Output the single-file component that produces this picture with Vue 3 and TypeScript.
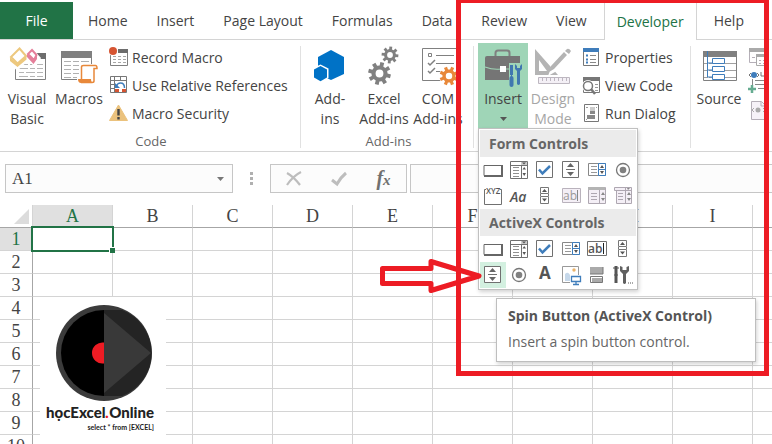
<script setup lang="ts">
import { ref } from 'vue'

interface Command {
  label: string
  icon: string
  disabled?: boolean
  menu?: boolean
}

interface MenuItem {
  label: string
  icon: string
}

const tabs = ['Home', 'Insert', 'Page Layout', 'Formulas', 'Data', 'Review', 'View', 'Developer', 'Help']
const activeTab = ref('Developer')

// The last column only closes the grid at the right edge and has no heading.
const columns = ['A', 'B', 'C', 'D', 'E', 'F', 'G', 'H', 'I', '']
const rows = Array.from({ length: 10 }, (_, i) => i + 1)
const cellName = ref('A1')
const formula = ref('')

/** Outline of a cog wheel with square teeth and a round hole. */
function gear(cx: number, cy: number, outer: number, teeth: number, fill: string, turn = 0): string {
  const inner = outer * 0.7
  const step = (Math.PI * 2) / teeth
  const points: string[] = []
  for (let i = 0; i < teeth; i++) {
    const a = i * step + turn
    const corners: [number, number][] = [[-0.3, inner], [-0.22, outer], [0.22, outer], [0.3, inner]]
    for (const [offset, r] of corners) {
      const t = a + offset * step
      points.push(`${(cx + r * Math.cos(t)).toFixed(2)} ${(cy + r * Math.sin(t)).toFixed(2)}`)
    }
  }
  const h = outer * 0.34
  return `<path fill="${fill}" fill-rule="evenodd" d="M${points.join('L')}Z M${cx - h} ${cy}a${h} ${h} 0 1 0 ${h * 2} 0a${h} ${h} 0 1 0 ${-h * 2} 0Z"/>`
}

const art: Record<string, string> = {
  visualBasic: `<path d="M8.500 5.500h30v26h-30z" fill="#fff" stroke="#808080"/><path d="M31 5h8v6h-8z" fill="#6d6d6d"/>
    <path d="M12 16.500h9m2 0h5m2 0h6M12 20.500h9m2 0h5m2 0h6M12 24.500h5m2 0h9m2 0h6M12 28.500h9m2 0h5m2 0h6" stroke="#b5b5b5"/>
    <path d="M11-2 0 11l10 12L22 12zM24-1l-7 7 11 14 6-10z" fill="#fff"/>
    <path d="M12.500.500 19 8 10.500 15.500 4 9z" fill="#fff" stroke="#edc87e" stroke-width="2"/><path d="M3 9.500l7.500 6L19.500 8v3.500l-9 7.500L3 13z" fill="#edc87e"/>
    <path d="M25 2l4.500 5-2.500 5L21 6z" fill="#fff" stroke="#e57f9a" stroke-width="2"/><path d="M20 6l7 6 3-5v4l-3.500 5L20 9z" fill="#e57f9a"/>`,
  macros: `<path d="M2.500 3.500h30v28h-30z" fill="#fff" stroke="#808080"/><path d="M2 3h31v7H2z" fill="#808080"/>
    <path d="M5 13.500h7m2 0h6m2 0h8M5 17.500h7m2 0h6m2 0h8M5 21.500h7m2 0h6M5 25.500h7m2 0h6M5 29.500h7m2 0h4" stroke="#b0b0b0"/>
    <path d="M22 16h15v6h-2v15H18v-9h4z" fill="#fff"/><path d="M22.500 31V19q0-1.500 2-1.500h12q1.500 0 1.500 3h-3V33q0 1.500-2 1.500H22" fill="#fff" stroke="#e8883a" stroke-width="1.500"/>
    <path d="M19 31h13q0 4 3 4H22q-3 0-3-4z" fill="#e8883a"/>`,
  addins: `<path d="M21 2l13 7v17l-13 6-13-6V9z" fill="#0072c6"/><path d="M10.500 16.500l8 4v9.500l-8 4.500-8-4.500v-9.500z" fill="#fff"/><path d="M10.500 18l6.500 3.500v8l-6.500 3.700L4 29.500v-8z" fill="#0072c6"/>`,
  excelAddins: gear(26, 7, 8.500, 8, '#808080', 0.1) + gear(15.500, 25.500, 11.500, 8, '#808080', 0.25),
  comAddins: `<path d="M4.500.500h36v32h-36z" fill="#fff" stroke="#808080"/><path d="M10.500 5.500h3v3h-3z" fill="none" stroke="#808080"/><path d="M18 7.500h18M18 15.500h18M18 23.500h8" stroke="#808080"/>
    <path d="M10 15l2 2 5-5M10 23l2 2 5-5" fill="none" stroke="#808080" stroke-width="1.500"/><circle cx="31" cy="28" r="10" fill="#fff"/>` + gear(31, 28, 9.500, 8, '#e8883a', 0.4),
  insert: `<path d="M12.500 9V5q0-2.500 2.500-2.500h9q2.500 0 2.500 2.500v4" fill="none" stroke="#808080" stroke-width="2"/><path d="M4 8h31q2 0 2 2v22H2V10q0-2 2-2z" fill="#757575"/>
    <path d="M2 19q8 3 16 2h5q8 0 14-2" fill="none" stroke="#9fd5b7" stroke-width="1.200"/><path d="M17 18h6v6h-6z" fill="#fff"/>
    <path d="M26 15h14v23H26z" fill="#9fd5b7"/><path d="M26 8h11v7H26z" fill="#757575"/>
    <path d="M28.500 17v10" stroke="#4077b0" stroke-width="3"/><path d="M28.500 27v3" stroke="#4077b0"/><path d="M28.500 30v7" stroke="#4077b0" stroke-width="4" stroke-linecap="round"/>
    <path d="M32 16v5l2 2v13q1.500 2 3 0V23l2-2v-5l-2 2v2h-3v-2z" fill="#4077b0"/>`,
  design: `<path fill-rule="evenodd" d="M2 1v26h23zM6 12l8 11H6z" fill="#b4b4b4"/><path d="M33 3 18 20l-3 8 7-4L38 6z" fill="#fff"/><path d="M31 4l3 3L21 21l-5 3 2-6zM32 3l2-2q2-1 4 2l-2 3z" fill="#b4b4b4"/>
    <path d="M5.500 29.500h31v6h-31z" fill="#f4f0f6" stroke="#bdb7c0"/><path d="M9.500 30v3m4-3v3m4-3v3m4-3v3m4-3v3m4-3v3m4-3v3" stroke="#bdb7c0"/>`,
  source: `<path d="M4.500 4.500h33v28h-33z" fill="#fff" stroke="#808080"/><path d="M4 3h34v6H4z" fill="#808080"/><path d="M10 15.500h27M10 22.500h27M10 29.500h27M5 15.500h4M5 22.500h4M5 29.500h4" stroke="#a0a0a0"/>
    <path d="M8.500 3v26h5M8.500 15h5M8.500 22h5" fill="none" stroke="#3f7dbb"/><path d="M13.500 10.500h12v5h-12zM13.500 18.500h12v5h-12zM13.500 26.500h12v5h-12z" fill="#fff" stroke="#3f7dbb"/>`,
  record: `<path d="M1.500 3.500h17v15h-17z" fill="#fff" stroke="#808080"/><path d="M9 2h10v4H9z" fill="#6d6d6d"/><path d="M4 9.500h3m2 0h3m2 0h3M4 12.500h3m2 0h3m2 0h3M4 15.500h3m2 0h3m2 0h3" stroke="#a6a6a6"/><circle cx="4" cy="4" r="5" fill="#fff"/><circle cx="4" cy="4" r="4" fill="#d65532"/>`,
  relative: `<path d="M1.500 1.500h16v16h-16zM1 5.500h17M5.500 1v17M11.500 1v5M1 9.500h5M1 13.500h5" fill="#fff" stroke="#777"/><path d="M6 6h11v11H6z" fill="#fff"/><path d="M15.500 13q0-5-4-5-3 0-4 3" fill="none" stroke="#3f7dbb" stroke-width="1.500"/><path d="M6 8v5h5z" fill="#3f7dbb"/><path d="M6 14h4v3H6zM13 14h4v3h-4z" fill="#d65532"/>`,
  security: `<path d="M9.500 2 18.500 17.500H.500z" fill="#ebc27d" stroke="#ebc27d" stroke-linejoin="round"/><path d="M9.500 6v6.500M9.500 14v2.500" stroke="#444" stroke-width="2.400"/>`,
  properties: `<path d="M1.500 1.500h15v17h-15z" fill="#fff" stroke="#777"/><path d="M1 1h16v4H1z" fill="#3f7dbb"/><path d="M4 8.500h2M4 12.500h2M4 15.500h2" stroke="#3f7dbb" stroke-width="2"/><path d="M8 8.500h6M8 12.500h6M8 15.500h6" stroke="#888"/>`,
  viewCode: `<path d="M1.500 2.500h16v15h-16z" fill="#fff" stroke="#777"/><path d="M1 2h17v4H1z" fill="#777"/><path d="M13 9.500h3M13 12.500h3M13 15.500h3" stroke="#999"/><circle cx="6" cy="11" r="6" fill="#fff"/><circle cx="6" cy="11" r="4.500" fill="#fff" stroke="#777" stroke-width="1.500"/><path d="M9 14l4 5" stroke="#777" stroke-width="2.500"/>`,
  runDialog: `<path d="M2.500 1.500h14v17h-14z" fill="#fff" stroke="#777"/><path d="M8 8h5v3H8zM5 12h8v4H5z" fill="#888"/><path d="M8 4h5v4H8z" fill="#ccc"/><path d="M4 4.500h2M14 4.500h1M4 16.500h1" stroke="#999"/>`,
  mapProps: `<path d="M.500 1.500h18v14H.500z" fill="#fff" stroke="#b5afb8"/><path d="M0 1h19v4H0z" fill="#aaa"/><path d="M7.500 8.500h12v10h-12z" fill="#fff" stroke="#aaa"/><path d="M7 7h12v3H7z" fill="#aaa"/><path d="M3 10.500h3M10 13.500h2m2 0h3M10 16.500h2m2 0h3" stroke="#b5afb8"/>`,
  expansion: `<circle cx="5" cy="0" r="3" fill="#3f7dbb"/><path d="M0 0l2-2M0 0l2 2M10 0 8-2m2 2L8 2M12-3v4h3" stroke="#777" fill="none"/><path d="M3.500 4v6M6 5.500h13M6 9.500h13M9 13.500h10" stroke="#888"/><path d="M3 10v8M-1 14h8" stroke="#66ac91" stroke-width="2.500"/>`,
  refresh: `<path d="M2.500-1.500h10l4 4v14h-14z" fill="#f6f2f8" stroke="#b5afb8"/><path d="M12-1v4h5" fill="none" stroke="#b5afb8"/><circle cx="9" cy="7" r="2.500" fill="#aaa"/><path d="M5 5 3 7l2 2M14 5l2 2-2 2" fill="none" stroke="#aaa"/>`,
}

const listLines = `<path d="M4 7.500h6M4 10.500h6M4 13.500h6M4 16.500h6" stroke="#909090"/>`
const glyphs: Record<string, string> = {
  button: `<path d="M1 5.500h18v10H1z" fill="#fff" stroke="#666"/><path d="M19 5v11H1" fill="none" stroke="#666" stroke-width="2"/>`,
  combo: `<path d="M1.500 1.500h17v17h-17zM2 5.500h16M12.500 5v13" fill="#fff" stroke="#707070"/>${listLines}<path d="M12 2h6v3h-6z" fill="#ccc"/><path d="M13 2.500h4l-2 2zM13.500 9.500h3.500L15.200 7zM13.500 13h3.500l-1.800 3z" fill="#555"/>`,
  check: `<path d="M1.500 1.500h16v16h-16z" fill="#fff" stroke="#707070"/><path d="M4 9.500l3.500 4L15 6" fill="none" stroke="#3f7dbb" stroke-width="2.500"/>`,
  spin: `<path d="M1.500 1.500h16v16h-16zM5 9.500h9" fill="#fff" stroke="#707070"/><path d="M9.500 3 13 7H6zM9.500 16 13 12H6z" fill="#666"/>`,
  listBox: `<path d="M1.500 3.500h17v12h-17z" fill="#fff" stroke="#888"/><path d="M4 6.500h6M4 9.500h6M4 12.500h6" stroke="#999"/><path d="M11.500 3.500h7v12h-7zM12 9.500h6" fill="#fff" stroke="#3f7dbb"/><path d="M13 8h4l-2-3zM13 11h4l-2 3z" fill="#555"/>`,
  option: `<circle cx="10" cy="10" r="6.500" fill="#fff" stroke="#777" stroke-width="1.300"/><circle cx="10" cy="10" r="3.300" fill="#808080"/>`,
  group: `<path d="M3 3.500H1.500v15h17v-15H17" fill="none" stroke="#707070"/><text x="3" y="8" class="tiny">XYZ</text>`,
  label: `<text x="1" y="16" class="italic">Aa</text>`,
  scroll: `<path d="M5.500 1.500h8v6h-8zM5.500 10.500h8v7h-8zM5.500 8v2M13.500 8v2" fill="#fff" stroke="#777"/><path d="M7 6h5L9.500 3zM7 12.500h5l-2.500 3z" fill="#555"/>`,
  textOff: `<path d="M1.500 2.500h18v14h-18z" fill="#f4eff6" stroke="#b9b2bc"/><text x="2" y="14" class="ab off">ab</text><path d="M16.500 4v11" stroke="#888"/>`,
  listOff: `<path d="M1.500 1.500h17v16h-17z" fill="#f4eff6" stroke="#aea7b1"/><path d="M1 1h17v3H1z" fill="#b4b4b4"/><path d="M4 7.500h6M4 10.500h6M4 13.500h6M12.500 4v13" stroke="#aea7b1"/><path d="M14 9h4l-2-3zM14 12h4l-2 3z" fill="#888"/>`,
  comboOff: `<path d="M1.500 1.500h17v3h-17zM3.500 4.500h15v13h-15z" fill="#f4eff6" stroke="#aea7b1"/><path d="M5 7.500h5M5 10.500h5M5 13.500h5M12.500 2v15" stroke="#aea7b1"/><path d="M14 2h3l-2 2zM14 9h4l-2-3zM14 12h4l-2 3z" fill="#888"/>`,
  text: `<path d="M.500 2.500h19v14h-19z" fill="#fff" stroke="#707070"/><text x="1" y="14" class="ab">ab</text><path d="M16.500 4v11" stroke="#222"/>`,
  letter: `<text x="4" y="14" class="big">A</text>`,
  image: `<path d="M1.500 1.500h16v16h-16z" fill="#fff" stroke="#999"/><path d="M4 16V9q3-3 5 1l2 6z" fill="#c6d8ea"/><circle cx="13" cy="5" r="1.700" fill="#ebb36a"/><path d="M9 10h11v9H9z" fill="#fff"/><path d="M10.500 11.500h9v5h-9zM15 17v2M12 19.500h6" fill="#fff" stroke="#3f7dbb" stroke-width="1.300"/>`,
  toggle: `<path d="M3 2h13v7H3z" fill="#aaa"/><path d="M3.500 11.500h12v6h-12z" fill="#fff" stroke="#777"/><path d="M5 13h10v4H5z" fill="#aaa"/><path d="M16 2v7H3" stroke="#777" fill="none"/>`,
  more: `<path d="M3 1v9M3 10v8" stroke="#555" stroke-width="3"/><path d="M0 3h6M1 10h4" stroke="#555"/><path d="M7 1v5l3 3v9q1.500 2 3 0V9l3-3V1l-2.500 1v3h-4V2z" fill="#606060"/><path d="M15 18h1m1 0h1m1 0h1" stroke="#555"/>`,
}

const codeLarge: Command[] = [
  { label: 'Visual Basic', icon: 'visualBasic' },
  { label: 'Macros', icon: 'macros' },
]
const codeSmall: Command[] = [
  { label: 'Record Macro', icon: 'record' },
  { label: 'Use Relative References', icon: 'relative' },
  { label: 'Macro Security', icon: 'security' },
]
const addins: Command[] = [
  { label: 'Add-\nins', icon: 'addins' },
  { label: 'Excel\nAdd-ins', icon: 'excelAddins' },
  { label: 'COM\nAdd-ins', icon: 'comAddins' },
]
const controlsLarge: Command[] = [
  { label: 'Insert', icon: 'insert', menu: true },
  { label: 'Design Mode', icon: 'design', disabled: true },
]
const controlsSmall: Command[] = [
  { label: 'Properties', icon: 'properties' },
  { label: 'View Code', icon: 'viewCode' },
  { label: 'Run Dialog', icon: 'runDialog' },
]
const xmlSmall: Command[] = [
  { label: 'Map Properties', icon: 'mapProps' },
  { label: 'Expansion Packs', icon: 'expansion' },
  { label: 'Refresh Data', icon: 'refresh' },
]

const menus: { title: string; items: MenuItem[] }[] = [
  {
    title: 'Form Controls',
    items: [
      { label: 'Button', icon: 'button' },
      { label: 'Combo Box', icon: 'combo' },
      { label: 'Check Box', icon: 'check' },
      { label: 'Spin Button', icon: 'spin' },
      { label: 'List Box', icon: 'listBox' },
      { label: 'Option Button', icon: 'option' },
      { label: 'Group Box', icon: 'group' },
      { label: 'Label', icon: 'label' },
      { label: 'Scroll Bar', icon: 'scroll' },
      { label: 'Text Field', icon: 'textOff' },
      { label: 'Combo List', icon: 'listOff' },
      { label: 'Combo Drop-Down', icon: 'comboOff' },
    ],
  },
  {
    title: 'ActiveX Controls',
    items: [
      { label: 'Command Button', icon: 'button' },
      { label: 'Combo Box', icon: 'combo' },
      { label: 'Check Box', icon: 'check' },
      { label: 'List Box', icon: 'listBox' },
      { label: 'Text Box', icon: 'text' },
      { label: 'Scroll Bar', icon: 'scroll' },
      { label: 'Spin Button', icon: 'spin' },
      { label: 'Option Button', icon: 'option' },
      { label: 'Label', icon: 'letter' },
      { label: 'Image', icon: 'image' },
      { label: 'Toggle Button', icon: 'toggle' },
      { label: 'More Controls', icon: 'more' },
    ],
  },
]
const isHovered = (title: string, item: MenuItem) => title === 'ActiveX Controls' && item.label === 'Spin Button'
</script>

<template>
  <div class="window">
    <nav class="tabs">
      <button class="file" type="button">File</button>
      <button
        v-for="tab in tabs"
        :key="tab"
        type="button"
        class="tab"
        :class="{ active: tab === activeTab }"
        @click="activeTab = tab"
      >{{ tab }}</button>
    </nav>

    <div class="ribbon">
      <section class="group">
        <div class="group-body">
          <button v-for="c in codeLarge" :key="c.label" type="button" class="large">
            <svg class="icon-large" viewBox="0 0 40 36" v-html="art[c.icon]" />
            <span>{{ c.label }}</span>
          </button>
          <div class="list">
            <button v-for="c in codeSmall" :key="c.label" type="button" class="small">
              <svg class="icon-small" viewBox="0 0 20 20" v-html="art[c.icon]" />{{ c.label }}
            </button>
          </div>
        </div>
        <div class="group-label">Code</div>
      </section>

      <section class="group addins">
        <div class="group-body">
          <button v-for="c in addins" :key="c.label" type="button" class="large">
            <svg class="icon-large" viewBox="0 0 40 36" v-html="art[c.icon]" />
            <span>{{ c.label }}</span>
          </button>
        </div>
        <div class="group-label">Add-ins</div>
      </section>

      <section class="group controls">
        <div class="group-body">
          <button
            v-for="c in controlsLarge"
            :key="c.label"
            type="button"
            class="large"
            :class="{ pressed: c.menu }"
            :disabled="c.disabled"
          >
            <svg class="icon-large" viewBox="0 0 40 36" v-html="art[c.icon]" />
            <span>{{ c.label }}</span>
            <svg v-if="c.menu" class="caret" viewBox="0 0 7 4"><path d="M0 0h7L3.500 4z" /></svg>
          </button>
          <div class="list">
            <button v-for="c in controlsSmall" :key="c.label" type="button" class="small">
              <svg class="icon-small" viewBox="0 0 20 20" v-html="art[c.icon]" />{{ c.label }}
            </button>
          </div>
        </div>

        <div class="gallery" role="menu">
          <template v-for="m in menus" :key="m.title">
            <h2>{{ m.title }}</h2>
            <div class="gallery-grid">
              <button
                v-for="item in m.items"
                :key="item.label"
                type="button"
                role="menuitem"
                :aria-label="item.label"
                :class="{ hovered: isHovered(m.title, item) }"
              >
                <svg class="icon-small" viewBox="0 0 20 20" v-html="glyphs[item.icon]" />
              </button>
            </div>
          </template>
        </div>
      </section>

      <section class="group xml">
        <div class="group-body">
          <button type="button" class="large">
            <svg class="icon-large" viewBox="0 0 40 36" v-html="art.source" />
            <span>Source</span>
          </button>
          <div class="list">
            <button v-for="c in xmlSmall" :key="c.label" type="button" class="small" :aria-label="c.label">
              <svg class="icon-small" viewBox="0 0 20 20" v-html="art[c.icon]" />
            </button>
          </div>
        </div>
      </section>
    </div>

    <div class="formula-bar">
      <div class="name-box">
        <input v-model="cellName" aria-label="Name box" />
        <button type="button" aria-label="Open name list">
          <svg class="caret" viewBox="0 0 7 4"><path d="M0 0h7L3.500 4z" /></svg>
        </button>
      </div>
      <div class="grip"><i /><i /><i /></div>
      <div class="entry">
        <button type="button" aria-label="Cancel">
          <svg viewBox="0 0 18 16"><path d="M2 2q7 4 13 12M16 1Q8 5 2 14" fill="none" stroke="#bdbdbd" stroke-width="2.200" /></svg>
        </button>
        <button type="button" aria-label="Enter">
          <svg viewBox="0 0 18 16"><path d="M2 9l5 4Q11 6 16 2" fill="none" stroke="#bdbdbd" stroke-width="3" /></svg>
        </button>
        <button type="button" class="fx" aria-label="Insert function">f<small>x</small></button>
      </div>
      <input v-model="formula" class="formula" aria-label="Formula" />
    </div>

    <main class="sheet">
      <table>
        <thead>
          <tr>
            <th class="corner"><svg viewBox="0 0 15 15"><path d="M15 0v15H0z" fill="#dcdcdc" /></svg></th>
            <th v-for="col in columns" :key="col" :class="{ selected: col === 'A' }">{{ col }}</th>
          </tr>
        </thead>
        <tbody>
          <tr v-for="row in rows" :key="row">
            <th :class="{ selected: row === 1 }">{{ row }}</th>
            <td v-for="col in columns" :key="col" :class="{ current: col + row === cellName }" />
          </tr>
        </tbody>
      </table>

      <figure class="brand">
        <svg viewBox="0 0 96 96">
          <circle cx="48" cy="48" r="48" fill="#3b3b3b" />
          <path d="M48 5a43 43 0 0 0 0 86z" fill="#000" />
          <path d="M48 5h18a46 46 0 0 1 0 86H48z" fill="#242424" />
          <path d="M48 8l47 40-47 40z" fill="#393939" />
          <path d="M48 37.500a10.500 10.500 0 0 0-12 10.500 10.500 10.500 0 0 0 12 10.500z" fill="#ed1c24" />
        </svg>
        <figcaption>
          <strong>họcExcel<em>.</em>Online</strong>
          <small>select * from [EXCEL]</small>
        </figcaption>
      </figure>
    </main>

    <div class="tooltip" role="tooltip">
      <strong>Spin Button (ActiveX Control)</strong>
      <p>Insert a spin button control.</p>
    </div>

    <div class="callout" />
    <svg class="arrow" viewBox="0 0 104 38">
      <path d="M2.500 11.500H51V4.500L99 19 51 33.500v-7H2.500z" fill="none" stroke="#ed1c24" stroke-width="5" stroke-linejoin="round" />
    </svg>
  </div>
</template>

<style>
body {
  overflow: hidden;
}
</style>

<style scoped>
.window {
  position: relative;
  display: flex;
  flex-direction: column;
  height: 100vh;
  overflow: hidden;
  background: #fff;
  color: #444;
  font-family: "Open Sans", "Noto Sans", sans-serif;
  font-size: 14px;
}
button,
input {
  margin: 0;
  padding: 0;
  border: 0;
  background: none;
  color: inherit;
  font: inherit;
}
svg {
  display: block;
  overflow: visible;
}

.tabs {
  display: flex;
  flex: none;
  gap: 1px;
  height: 37px;
  padding-top: 2px;
  border-bottom: 1px solid #d4d4d4;
}
.tabs button {
  flex: none;
  white-space: nowrap;
}
.file {
  width: 73px;
  background: #217346;
  color: #fff;
}
.tab {
  padding: 0 13px;
  border: solid transparent;
  border-width: 0 1px;
}
.tab.active {
  height: 38px;
  margin: 0 2px;
  padding: 0 12px;
  border-color: #d4d4d4;
  background: #fff;
  color: #217346;
}

.ribbon {
  display: flex;
  flex: none;
  padding-top: 3px;
  border-bottom: 1px solid #d4d4d4;
}
.group {
  position: relative;
  box-sizing: border-box;
  flex: none;
  width: 301px;
  height: 108px;
  padding-left: 1px;
  background: linear-gradient(#e1e1e1, #e1e1e1) right center / 1px 102px no-repeat;
}
.addins {
  width: 173px;
  padding-left: 2px;
}
.controls {
  width: 217px;
  padding-left: 4px;
}
.xml {
  flex: 1;
  padding-left: 2px;
  background: none;
}
.group-body {
  display: flex;
  height: 85px;
}
.group-label {
  padding-top: 4px;
  color: #666;
  font-size: 13px;
  line-height: 18px;
  text-align: center;
}
.large {
  display: flex;
  flex: none;
  flex-direction: column;
  align-items: center;
  width: 52px;
  height: 85px;
  padding-top: 5px;
  line-height: 20px;
}
.large span {
  margin-top: 5px;
  white-space: pre-line;
}
.addins .large {
  width: 54px;
}
.controls .large {
  width: 50px;
}
.large:disabled {
  color: #a6a6a6;
}
.pressed {
  background: #9fd5b7;
}
.pressed .caret {
  margin-top: 8px;
}
.icon-large {
  flex: none;
  width: 40px;
  height: 36px;
}
.icon-small {
  flex: none;
  width: 20px;
  height: 20px;
}
.caret {
  width: 7px;
  height: 4px;
  fill: #555;
}
.list {
  padding-left: 4px;
}
.small {
  display: flex;
  align-items: center;
  gap: 3px;
  height: 28px;
  white-space: nowrap;
}

.gallery {
  position: absolute;
  z-index: 2;
  top: 85px;
  left: 4px;
  width: 156px;
  padding: 1px;
  border: 1px solid #c0c0c0;
  background: #fff;
  box-shadow: 1px 2px 4px rgb(0 0 0 / 18%);
}
.gallery h2 {
  margin: 0;
  padding-left: 9px;
  background: #ebebeb;
  color: #666;
  font-size: 14px;
  font-weight: 700;
  line-height: 27px;
}
.gallery-grid {
  display: grid;
  grid-template-columns: repeat(6, 26px);
  grid-auto-rows: 26px;
}
.gallery-grid button {
  display: grid;
  place-items: center;
}
.hovered {
  background: #d3f0e0;
}
.gallery :deep(text) {
  fill: #555;
  font-weight: 600;
}
.gallery :deep(.tiny) {
  font-size: 8px;
}
.gallery :deep(.italic) {
  font-size: 14px;
  font-style: italic;
}
.gallery :deep(.ab) {
  font-size: 12px;
}
.gallery :deep(.off) {
  fill: #999;
  font-weight: 400;
}
.gallery :deep(.big) {
  font-size: 17px;
  font-weight: 700;
}

.formula-bar {
  display: flex;
  flex: none;
  height: 29px;
  padding: 12px 0 12px 5px;
}
.name-box,
.entry,
.formula {
  box-sizing: border-box;
  border: 1px solid #c6c6c6;
  background: #fcfcfc;
}
.name-box {
  display: flex;
  width: 228px;
  font-family: "Liberation Serif", serif;
  font-size: 17px;
}
.name-box input {
  flex: 1;
  min-width: 0;
  padding-left: 6px;
}
.name-box button {
  display: grid;
  place-items: center;
  width: 24px;
}
.name-box .caret {
  fill: #777;
}
.grip {
  display: flex;
  flex-direction: column;
  justify-content: center;
  align-items: center;
  gap: 2px;
  width: 37px;
}
.grip i {
  width: 3px;
  height: 3px;
  background: #b0b0b0;
}
.entry {
  display: flex;
  justify-content: space-around;
  width: 137px;
  margin-right: 3px;
}
.entry button {
  display: grid;
  place-items: center;
  width: 36px;
}
.entry svg {
  width: 18px;
  height: 16px;
}
.entry .fx {
  display: block;
  color: #707070;
  font: italic 700 20px/24px "Liberation Serif", serif;
}
.fx small {
  font-size: 15px;
}
.formula {
  flex: 1;
  min-width: 0;
  border-right: 0;
}

.sheet {
  position: relative;
  flex: 1;
  min-height: 0;
  overflow: hidden;
  font-family: "Liberation Serif", serif;
  font-size: 18px;
}
table {
  width: 833px;
  table-layout: fixed;
  border-spacing: 0;
}
th,
td {
  box-sizing: border-box;
  width: 80px;
  height: 23px;
  padding: 0;
  border: solid #d4d4d4;
  border-width: 0 1px 1px 0;
  font-weight: 400;
  line-height: 22px;
}
thead th {
  border-bottom-color: #a6a6a6;
}
tr > th:first-child {
  width: 33px;
}
tbody th {
  border-right-color: #a6a6a6;
}
.corner svg {
  width: 15px;
  height: 15px;
  margin-left: 14px;
}
th.selected {
  background: #e0e0e0;
  color: #217346;
}
.current {
  position: relative;
}
.current::before {
  position: absolute;
  inset: -2px;
  border: 2px solid #217346;
  content: "";
}
.current::after {
  position: absolute;
  right: -3px;
  bottom: -3px;
  width: 5px;
  height: 5px;
  border: solid #fff;
  border-width: 1px 0 0 1px;
  background: #217346;
  content: "";
}

.brand {
  position: absolute;
  top: 92px;
  left: 40px;
  box-sizing: border-box;
  width: 126px;
  height: 150px;
  margin: 0;
  padding-top: 8px;
  background: #fff;
  color: #222;
  font-family: Lato, sans-serif;
}
.brand svg {
  width: 96px;
  height: 96px;
  margin-left: 16px;
}
.brand figcaption {
  display: flex;
  flex-direction: column;
  align-items: flex-end;
  padding-right: 12px;
}
.brand strong {
  font-size: 15px;
  font-weight: 900;
  line-height: 22px;
}
.brand em {
  color: #ed1c24;
}
.brand small {
  font-size: 7px;
  font-weight: 700;
  line-height: 8px;
}

.tooltip {
  position: absolute;
  z-index: 3;
  top: 298px;
  left: 496px;
  box-sizing: border-box;
  width: 260px;
  padding: 5px 11px 8px;
  border: 1px solid #bebebe;
  background: #fff;
  box-shadow: 1px 2px 4px rgb(0 0 0 / 18%);
  color: #666;
  line-height: 24px;
}
.tooltip strong {
  color: #555;
}
.tooltip p {
  margin: 3px 0 0;
  line-height: 22px;
}
.callout {
  position: absolute;
  z-index: 4;
  top: 0;
  left: 456px;
  box-sizing: border-box;
  width: 313px;
  height: 376px;
  border: 5px solid #ed1c24;
  border-top-width: 3px;
  pointer-events: none;
}
.arrow {
  position: absolute;
  z-index: 5;
  top: 257px;
  left: 380px;
  width: 104px;
  height: 38px;
  pointer-events: none;
}
</style>
